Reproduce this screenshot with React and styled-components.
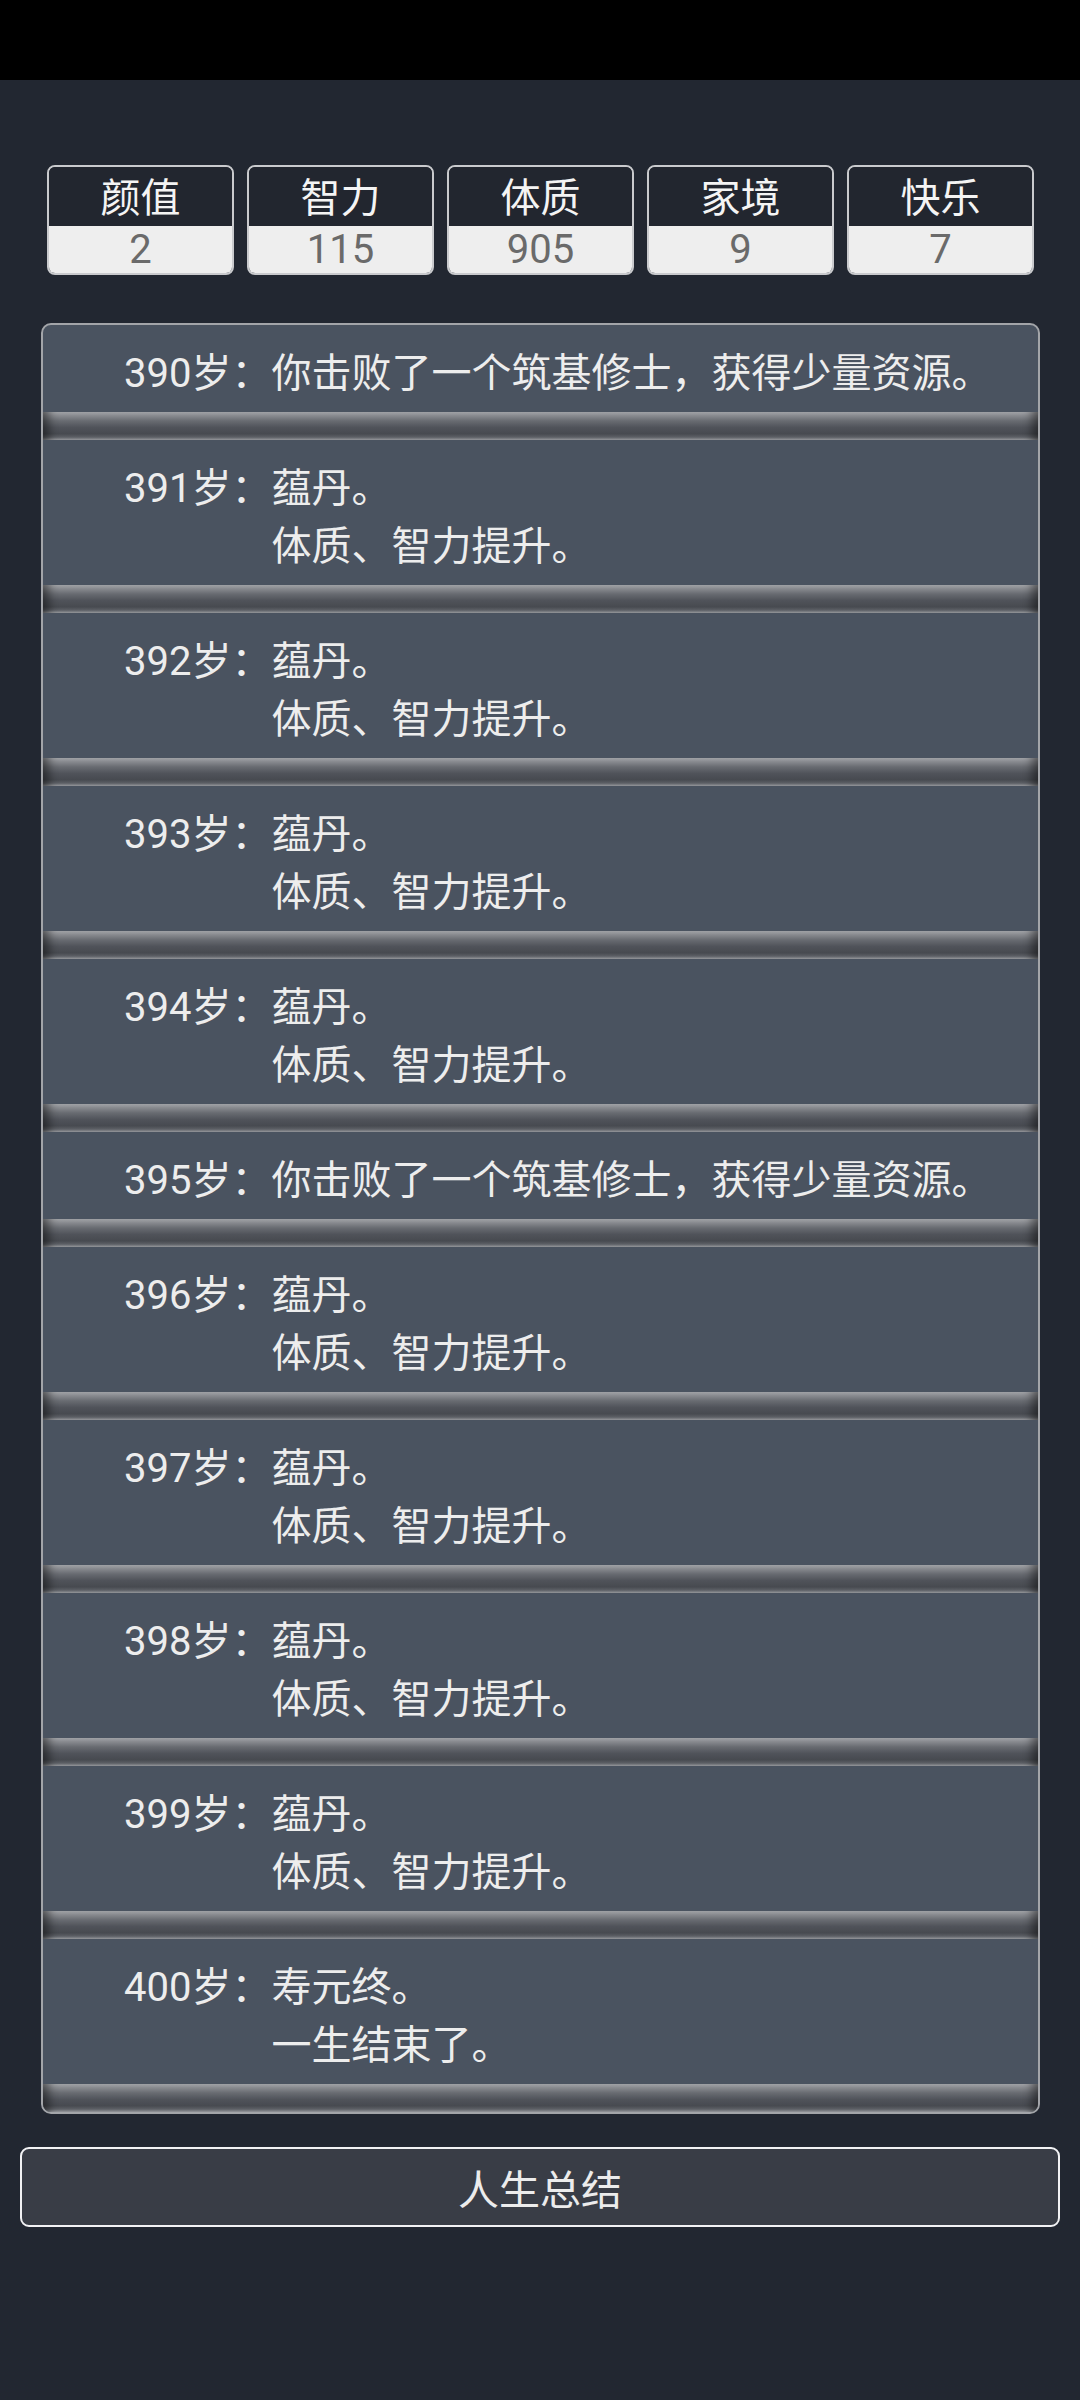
import React from "react";
import styled, { createGlobalStyle } from "styled-components";

const GlobalStyle = createGlobalStyle`
  html, body {
    margin: 0;
    padding: 0;
    background: #222731;
  }
  body {
    font-family: Roboto, "Noto Sans CJK SC", "Noto Sans", sans-serif;
    color: #ececec;
  }
`;

const Page = styled.div`
  min-height: 2400px;
  background: #222731;
  display: flex;
  flex-direction: column;
`;

const StatusBar = styled.div`
  height: 80px;
  background: #000;
`;

const StatGrid = styled.div`
  display: grid;
  grid-template-columns: repeat(5, 1fr);
  gap: 13px;
  margin: 85px 46px 0 47px;
`;

const StatBox = styled.div`
  border: 2px solid #c9cacd;
  border-radius: 8px;
  overflow: hidden;
  display: flex;
  flex-direction: column;
`;

const StatLabel = styled.div`
  height: 59px;
  box-sizing: border-box;
  padding-top: 4px;
  line-height: 55px;
  text-align: center;
  font-size: 40px;
  color: #f4f4f4;
  background: #22262f;
`;

const StatValue = styled.div`
  height: 47px;
  line-height: 47px;
  text-align: center;
  font-size: 40px;
  color: #6a6a6a;
  background: #eeeeee;
`;

const LogPanel = styled.div`
  margin: 48px 40px 0 41px;
  border: 2px solid #a3a5a9;
  border-radius: 10px;
  overflow: hidden;
  background: #4a5360;
`;

const LogRow = styled.div`
  display: flex;
  padding: 20px 0 9px 81px;
  font-size: 40px;
  line-height: 58px;
  color: #ededed;
  white-space: nowrap;
`;

const Age = styled.span`
  flex: none;
`;

const Lines = styled.div`
  display: flex;
  flex-direction: column;
`;

const Groove = styled.div`
  height: 28px;
  background: linear-gradient(
    180deg,
    #a4a6aa 0%,
    #8a8c91 12%,
    #686b71 32%,
    #50535a 55%,
    #474a50 78%,
    #5d6066 90%,
    #9a9ca0 100%
  );
  box-shadow: inset 14px 0 10px -8px rgba(0, 0, 0, 0.45),
    inset -14px 0 10px -8px rgba(0, 0, 0, 0.45);
`;

const SummaryButton = styled.button`
  margin: 33px 20px 0 20px;
  height: 80px;
  border: 2px solid #f2f2f4;
  border-radius: 9px;
  background: #393d46;
  color: #ececec;
  font-family: Roboto, "Noto Sans CJK SC", sans-serif;
  font-size: 41px;
  padding: 0;
`;

const stats = [
  { label: "颜值", value: 2 },
  { label: "智力", value: 115 },
  { label: "体质", value: 905 },
  { label: "家境", value: 9 },
  { label: "快乐", value: 7 },
];

const defeat = ["你击败了一个筑基修士，获得少量资源。"];
const pill = ["蕴丹。", "体质、智力提升。"];

const events = [
  { age: 390, lines: defeat },
  { age: 391, lines: pill },
  { age: 392, lines: pill },
  { age: 393, lines: pill },
  { age: 394, lines: pill },
  { age: 395, lines: defeat },
  { age: 396, lines: pill },
  { age: 397, lines: pill },
  { age: 398, lines: pill },
  { age: 399, lines: pill },
  { age: 400, lines: ["寿元终。", "一生结束了。"] },
];

export default function App() {
  return (
    <>
      <GlobalStyle />
      <Page>
        <StatusBar />
        <StatGrid>
          {stats.map((s) => (
            <StatBox key={s.label}>
              <StatLabel>{s.label}</StatLabel>
              <StatValue>{s.value}</StatValue>
            </StatBox>
          ))}
        </StatGrid>
        <LogPanel>
          {events.map((e) => (
            <React.Fragment key={e.age}>
              <LogRow>
                <Age>{e.age}岁：</Age>
                <Lines>
                  {e.lines.map((l, i) => (
                    <span key={i}>{l}</span>
                  ))}
                </Lines>
              </LogRow>
              <Groove />
            </React.Fragment>
          ))}
        </LogPanel>
        <SummaryButton>人生总结</SummaryButton>
      </Page>
    </>
  );
}
